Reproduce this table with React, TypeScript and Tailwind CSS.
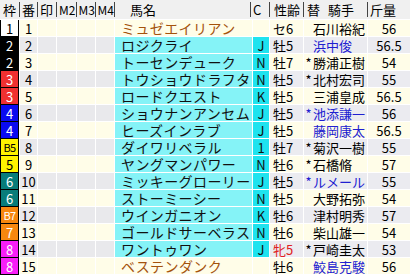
import React from "react";

type Horse = {
  waku: number;
  ban: number;
  b?: boolean;
  name: string;
  c: string;
  sa: string;
  red?: boolean;
  jockey: string;
  star?: boolean;
  blue?: boolean;
  kg: string;
  brown?: boolean;
};

const horses: Horse[] = [
  { waku: 1, ban: 1, name: "ミュゼエイリアン", c: "", sa: "セ6", jockey: "石川裕紀", kg: "56", brown: true },
  { waku: 2, ban: 2, name: "ロジクライ", c: "J", sa: "牡5", jockey: "浜中俊", blue: true, kg: "56.5" },
  { waku: 2, ban: 3, name: "トーセンデューク", c: "N", sa: "牡7", jockey: "勝浦正樹", star: true, kg: "54" },
  { waku: 3, ban: 4, name: "トウショウドラフタ", c: "N", sa: "牡5", jockey: "北村宏司", star: true, kg: "55" },
  { waku: 3, ban: 5, name: "ロードクエスト", c: "K", sa: "牡5", jockey: "三浦皇成", kg: "56.5" },
  { waku: 4, ban: 6, name: "ショウナンアンセム", c: "J", sa: "牡5", jockey: "池添謙一", star: true, blue: true, kg: "56" },
  { waku: 4, ban: 7, name: "ヒーズインラブ", c: "J", sa: "牡5", jockey: "藤岡康太", blue: true, kg: "56.5" },
  { waku: 5, ban: 8, b: true, name: "ダイワリベラル", c: "1", sa: "牡7", jockey: "菊沢一樹", star: true, kg: "55" },
  { waku: 5, ban: 9, name: "ヤングマンパワー", c: "N", sa: "牡6", jockey: "石橋脩", star: true, kg: "57" },
  { waku: 6, ban: 10, name: "ミッキーグローリー", c: "J", sa: "牡5", jockey: "ルメール", star: true, blue: true, kg: "55" },
  { waku: 6, ban: 11, name: "ストーミーシー", c: "N", sa: "牡5", jockey: "大野拓弥", kg: "54" },
  { waku: 7, ban: 12, b: true, name: "ウインガニオン", c: "K", sa: "牡6", jockey: "津村明秀", kg: "57" },
  { waku: 7, ban: 13, name: "ゴールドサーベラス", c: "N", sa: "牡6", jockey: "柴山雄一", kg: "54" },
  { waku: 8, ban: 14, name: "ワントゥワン", c: "J", sa: "牝5", red: true, jockey: "戸崎圭太", star: true, kg: "53" },
  { waku: 8, ban: 15, name: "ベステンダンク", c: "", sa: "牡6", jockey: "鮫島克駿", blue: true, kg: "56", brown: true },
];

const wakuStyle: Record<number, string> = {
  1: "bg-white text-black",
  2: "bg-black text-white",
  3: "bg-[#f03030] text-white",
  4: "bg-[#0a0af0] text-white",
  5: "bg-[#fff200] text-black",
  6: "bg-[#087c7a] text-white",
  7: "bg-[#f7870f] text-white",
  8: "bg-[#f81ef8] text-white",
};

const cols =
  "grid grid-cols-[19px_17px_18px_19px_18px_18px_137px_16px_33px_63px_42px] gap-x-px";

function Sep() {
  return <span className="-ml-px h-[15px] w-px bg-[#444]" />;
}

function Header() {
  const cell = "flex items-center h-full";
  return (
    <div className={`${cols} h-[19px] bg-[#f0f0f0] mb-px text-[13px] text-black`}>
      <div className={`${cell} justify-center`}>枠</div>
      <div className={cell}><Sep /><span className="ml-[2px]">番</span></div>
      <div className={cell}><Sep /><span className="ml-[2px]">印</span></div>
      <div className={cell}><Sep /><span className="ml-[2px] text-[12px]">M2</span></div>
      <div className={cell}><Sep /><span className="ml-[2px] text-[12px]">M3</span></div>
      <div className={cell}><Sep /><span className="ml-[2px] text-[12px]">M4</span></div>
      <div className={cell}><Sep /><span className="ml-[15px]">馬名</span></div>
      <div className={cell}><span className="-ml-[3px] h-[15px] w-px bg-[#444]" /><span className="ml-[2px]">C</span></div>
      <div className={cell}><Sep /><span className="ml-[4px]">性齢</span></div>
      <div className={cell}><Sep /><span className="ml-[3px]">替</span><span className="ml-[8px]">騎手</span></div>
      <div className={cell}><Sep /><span className="ml-[2px]">斤量</span></div>
    </div>
  );
}

function Row({ h }: { h: Horse }) {
  const even = h.ban % 2 === 0;
  const left = even ? "bg-[#e9e9ec]" : "bg-[#fffde8]";
  const right = even ? "bg-[#ebebf0]" : "bg-[#fffde8]";
  const cell = "flex items-center h-[17px] border-b border-white";
  const nameBg = h.brown ? "bg-[#fffde8] text-[#a4520c]" : "bg-[#85f3f7] text-[#111]";
  const jColor = h.blue ? "text-[#2020d0]" : "text-black";
  return (
    <div className={`${cols} bg-white text-[13px]`}>
      <div
        className={`${cell} justify-center border-x border-b-black border-x-black ${wakuStyle[h.waku]}`}
      >
        {h.b ? <span className="text-[11px] tracking-tighter">B{h.waku}</span> : h.waku}
      </div>
      <div className={`${cell} justify-center ${left}`}>{h.ban}</div>
      <div className={`${cell} ${left}`} />
      <div className={`${cell} ${left}`} />
      <div className={`${cell} ${left}`} />
      <div className={`${cell} ${left}`} />
      <div className={`${cell} pl-[6px] text-[14px] tracking-[0.4px] ${nameBg}`}>{h.name}</div>
      <div className={`${cell} justify-center ${h.c ? "bg-[#1ee3ef] text-[#111]" : "bg-[#fffde8]"}`}>
        {h.c}
      </div>
      <div className={`${cell} pl-[3px] ${right} ${h.red ? "text-[#e02020]" : "text-black"}`}>
        {h.sa}
      </div>
      <div className={`${cell} ${right} ${jColor}`}>
        <span className="w-[9px] text-center">{h.star ? "*" : ""}</span>
        <span>{h.jockey}</span>
      </div>
      <div className={`${cell} justify-center ${right} text-black`}>{h.kg}</div>
    </div>
  );
}

export default function App() {
  return (
    <div className="w-[410px] h-[277px] bg-white overflow-hidden leading-none [font-family:'Noto_Sans_CJK_JP',sans-serif]">
      <Header />
      {horses.map((h) => (
        <Row key={h.ban} h={h} />
      ))}
    </div>
  );
}
